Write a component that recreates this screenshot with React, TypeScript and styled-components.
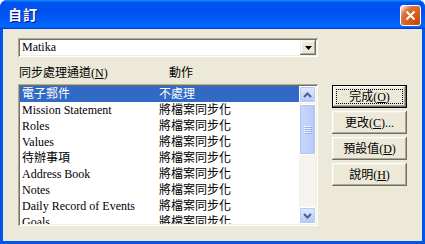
import React from "react";
import styled, { createGlobalStyle } from "styled-components";

const GlobalStyle = createGlobalStyle`
  html, body {
    margin: 0;
    padding: 0;
    background: #ffffff;
  }
  body {
    font-family: "Liberation Serif", "Noto Sans CJK TC", serif;
    font-size: 12px;
    color: #000;
  }
`;

const Window = styled.div`
  width: 425px;
  height: 244px;
  display: flex;
  flex-direction: column;
  border-radius: 7px 7px 0 0;
  overflow: hidden;
  background: #0055ea;
`;

const TitleBar = styled.div`
  height: 29px;
  flex: none;
  display: flex;
  justify-content: space-between;
  padding: 0 4px 0 8px;
  box-sizing: border-box;
  background: linear-gradient(
    180deg,
    #0997ff,
    #0053ee 8%,
    #0050ee 40%,
    #0066ff 88%,
    #0066ff 93%,
    #005bff 95%,
    #003dd7 96%,
    #003dd7
  );
`;

const Title = styled.span`
  font-family: "Noto Sans CJK TC", sans-serif;
  font-weight: bold;
  font-size: 14px;
  line-height: 29px;
  color: #fff;
  text-shadow: 1px 1px #0f1089;
  letter-spacing: 1px;
`;

const CloseButton = styled.div`
  width: 21px;
  height: 21px;
  margin-top: 5px;
  box-sizing: border-box;
  border: 1px solid #fff;
  border-radius: 3px;
  display: flex;
  align-items: center;
  justify-content: center;
  background: radial-gradient(circle at 90% 90%, #cc4600 0%, #dc6527 55%, #cd7546 70%, #ffccb2 90%, #fff 100%);
`;

const Client = styled.div`
  flex: 1;
  margin: 0 3px 3px;
  background: #ece9d8;
  padding: 9px 0 0 15px;
  display: flex;
  flex-direction: column;
`;

const Sunken = styled.div`
  box-sizing: border-box;
  background: #fff;
  box-shadow: inset 1px 1px #aca899, inset -1px -1px #fff, inset 2px 2px #716f64, inset -2px -2px #f1efe2;
`;

const Combo = styled(Sunken)`
  width: 300px;
  height: 19px;
  padding: 2px;
  display: flex;
`;

const ComboText = styled.div`
  flex: 1;
  padding-left: 2px;
  line-height: 15px;
`;

const DropButton = styled.div`
  width: 16px;
  height: 15px;
  box-sizing: border-box;
  background: #ece9d8;
  box-shadow: inset -1px -1px #716f64, inset 1px 1px #f1efe2, inset -2px -2px #aca899, inset 2px 2px #fff;
  display: flex;
  align-items: center;
  justify-content: center;
`;

const HeaderRow = styled.div`
  margin-top: 8px;
  height: 16px;
  display: grid;
  grid-template-columns: 150px auto;
  padding-left: 1px;
  line-height: 16px;
`;

const Body = styled.div`
  margin-top: 3px;
  display: flex;
  gap: 14px;
`;

const ListBox = styled(Sunken)`
  width: 300px;
  height: 142px;
  padding: 2px;
  display: flex;
`;

const Rows = styled.div`
  flex: 1;
  overflow: hidden;
`;

const Row = styled.div<{ $selected?: boolean }>`
  height: 16px;
  line-height: 16px;
  display: grid;
  grid-template-columns: 137px auto;
  padding-left: 2px;
  white-space: nowrap;
  background: ${(p) => (p.$selected ? "#316ac5" : "transparent")};
  color: ${(p) => (p.$selected ? "#fff" : "#000")};
`;

const ScrollBar = styled.div`
  width: 17px;
  display: flex;
  flex-direction: column;
  background: #f4f3ee;
`;

const ScrollButton = styled.div`
  height: 17px;
  flex: none;
  box-sizing: border-box;
  border: 1px solid #fff;
  border-radius: 2px;
  background: linear-gradient(180deg, #e1eafe 0%, #c5d5fb 60%, #b5c8f7 100%);
  box-shadow: inset 0 0 0 1px #b7caf5;
  display: flex;
  align-items: center;
  justify-content: center;
`;

const Track = styled.div`
  flex: 1;
  padding: 1px 0;
  display: flex;
  flex-direction: column;
`;

const Thumb = styled.div<{ $size: number }>`
  height: ${(p) => p.$size}px;
  box-sizing: border-box;
  border: 1px solid #fff;
  border-radius: 2px;
  background: linear-gradient(90deg, #c9d7fb 0%, #c1d1fa 50%, #b6c8f6 100%);
  box-shadow: inset 0 0 0 1px #b1c5f3;
  display: flex;
  flex-direction: column;
  align-items: center;
  justify-content: center;
  gap: 1px;
`;

const Grip = styled.div`
  width: 7px;
  height: 1px;
  background: #eef3fe;
  box-shadow: 1px 1px #8cb0f8;
`;

const Buttons = styled.div`
  margin-top: 1px;
  display: flex;
  flex-direction: column;
  gap: 3px;
`;

const Button = styled.div<{ $default?: boolean }>`
  width: 75px;
  height: 23px;
  box-sizing: border-box;
  background: #ece9d8;
  border: ${(p) => (p.$default ? "1px solid #000" : "none")};
  box-shadow: inset -1px -1px #716f64, inset 1px 1px #fff, inset -2px -2px #aca899, inset 2px 2px #f1efe2;
  display: flex;
  align-items: center;
  justify-content: center;
  padding: ${(p) => (p.$default ? "3px" : "0")};
`;

const ButtonLabel = styled.div<{ $focused?: boolean }>`
  flex: 1;
  align-self: stretch;
  display: flex;
  align-items: center;
  justify-content: center;
  line-height: 14px;
  outline: ${(p) => (p.$focused ? "1px dotted #000" : "none")};
  outline-offset: -1px;
`;

const Key = styled.span`
  text-decoration: underline;
`;

const rows = [
  ["電子郵件", "不處理"],
  ["Mission Statement", "將檔案同步化"],
  ["Roles", "將檔案同步化"],
  ["Values", "將檔案同步化"],
  ["待辦事項", "將檔案同步化"],
  ["Address Book", "將檔案同步化"],
  ["Notes", "將檔案同步化"],
  ["Daily Record of Events", "將檔案同步化"],
  ["Goals", "將檔案同步化"],
];

const Arrow = ({ up }: { up?: boolean }) => (
  <svg width="9" height="6" viewBox="0 0 9 6">
    <path
      d={up ? "M1 5 L4.5 1.5 L8 5" : "M1 1 L4.5 4.5 L8 1"}
      fill="none"
      stroke="#4d6185"
      strokeWidth="2"
    />
  </svg>
);

const App = () => {
  return (
    <>
      <GlobalStyle />
      <Window>
        <TitleBar>
          <Title>自訂</Title>
          <CloseButton>
            <svg width="11" height="11" viewBox="0 0 11 11">
              <path d="M1.5 1.5 L9.5 9.5 M9.5 1.5 L1.5 9.5" stroke="#fff" strokeWidth="2" />
            </svg>
          </CloseButton>
        </TitleBar>
        <Client>
          <Combo>
            <ComboText>Matika</ComboText>
            <DropButton>
              <svg width="7" height="4" viewBox="0 0 7 4">
                <path d="M0 0 H7 L3.5 4 Z" fill="#000" />
              </svg>
            </DropButton>
          </Combo>
          <HeaderRow>
            <span>
              同步處理通道(<Key>N</Key>)
            </span>
            <span>動作</span>
          </HeaderRow>
          <Body>
            <ListBox>
              <Rows>
                {rows.map(([name, action], i) => (
                  <Row key={name} $selected={i === 0}>
                    <span>{name}</span>
                    <span>{action}</span>
                  </Row>
                ))}
              </Rows>
              <ScrollBar>
                <ScrollButton>
                  <Arrow up />
                </ScrollButton>
                <Track>
                  <Thumb $size={51}>
                    <Grip />
                    <Grip />
                    <Grip />
                    <Grip />
                  </Thumb>
                </Track>
                <ScrollButton>
                  <Arrow />
                </ScrollButton>
              </ScrollBar>
            </ListBox>
            <Buttons>
              <Button $default>
                <ButtonLabel $focused>
                  完成(<Key>O</Key>)
                </ButtonLabel>
              </Button>
              <Button>
                <ButtonLabel>
                  更改(<Key>C</Key>)...
                </ButtonLabel>
              </Button>
              <Button>
                <ButtonLabel>
                  預設值(<Key>D</Key>)
                </ButtonLabel>
              </Button>
              <Button>
                <ButtonLabel>
                  說明(<Key>H</Key>)
                </ButtonLabel>
              </Button>
            </Buttons>
          </Body>
        </Client>
      </Window>
    </>
  );
};

export default App;
